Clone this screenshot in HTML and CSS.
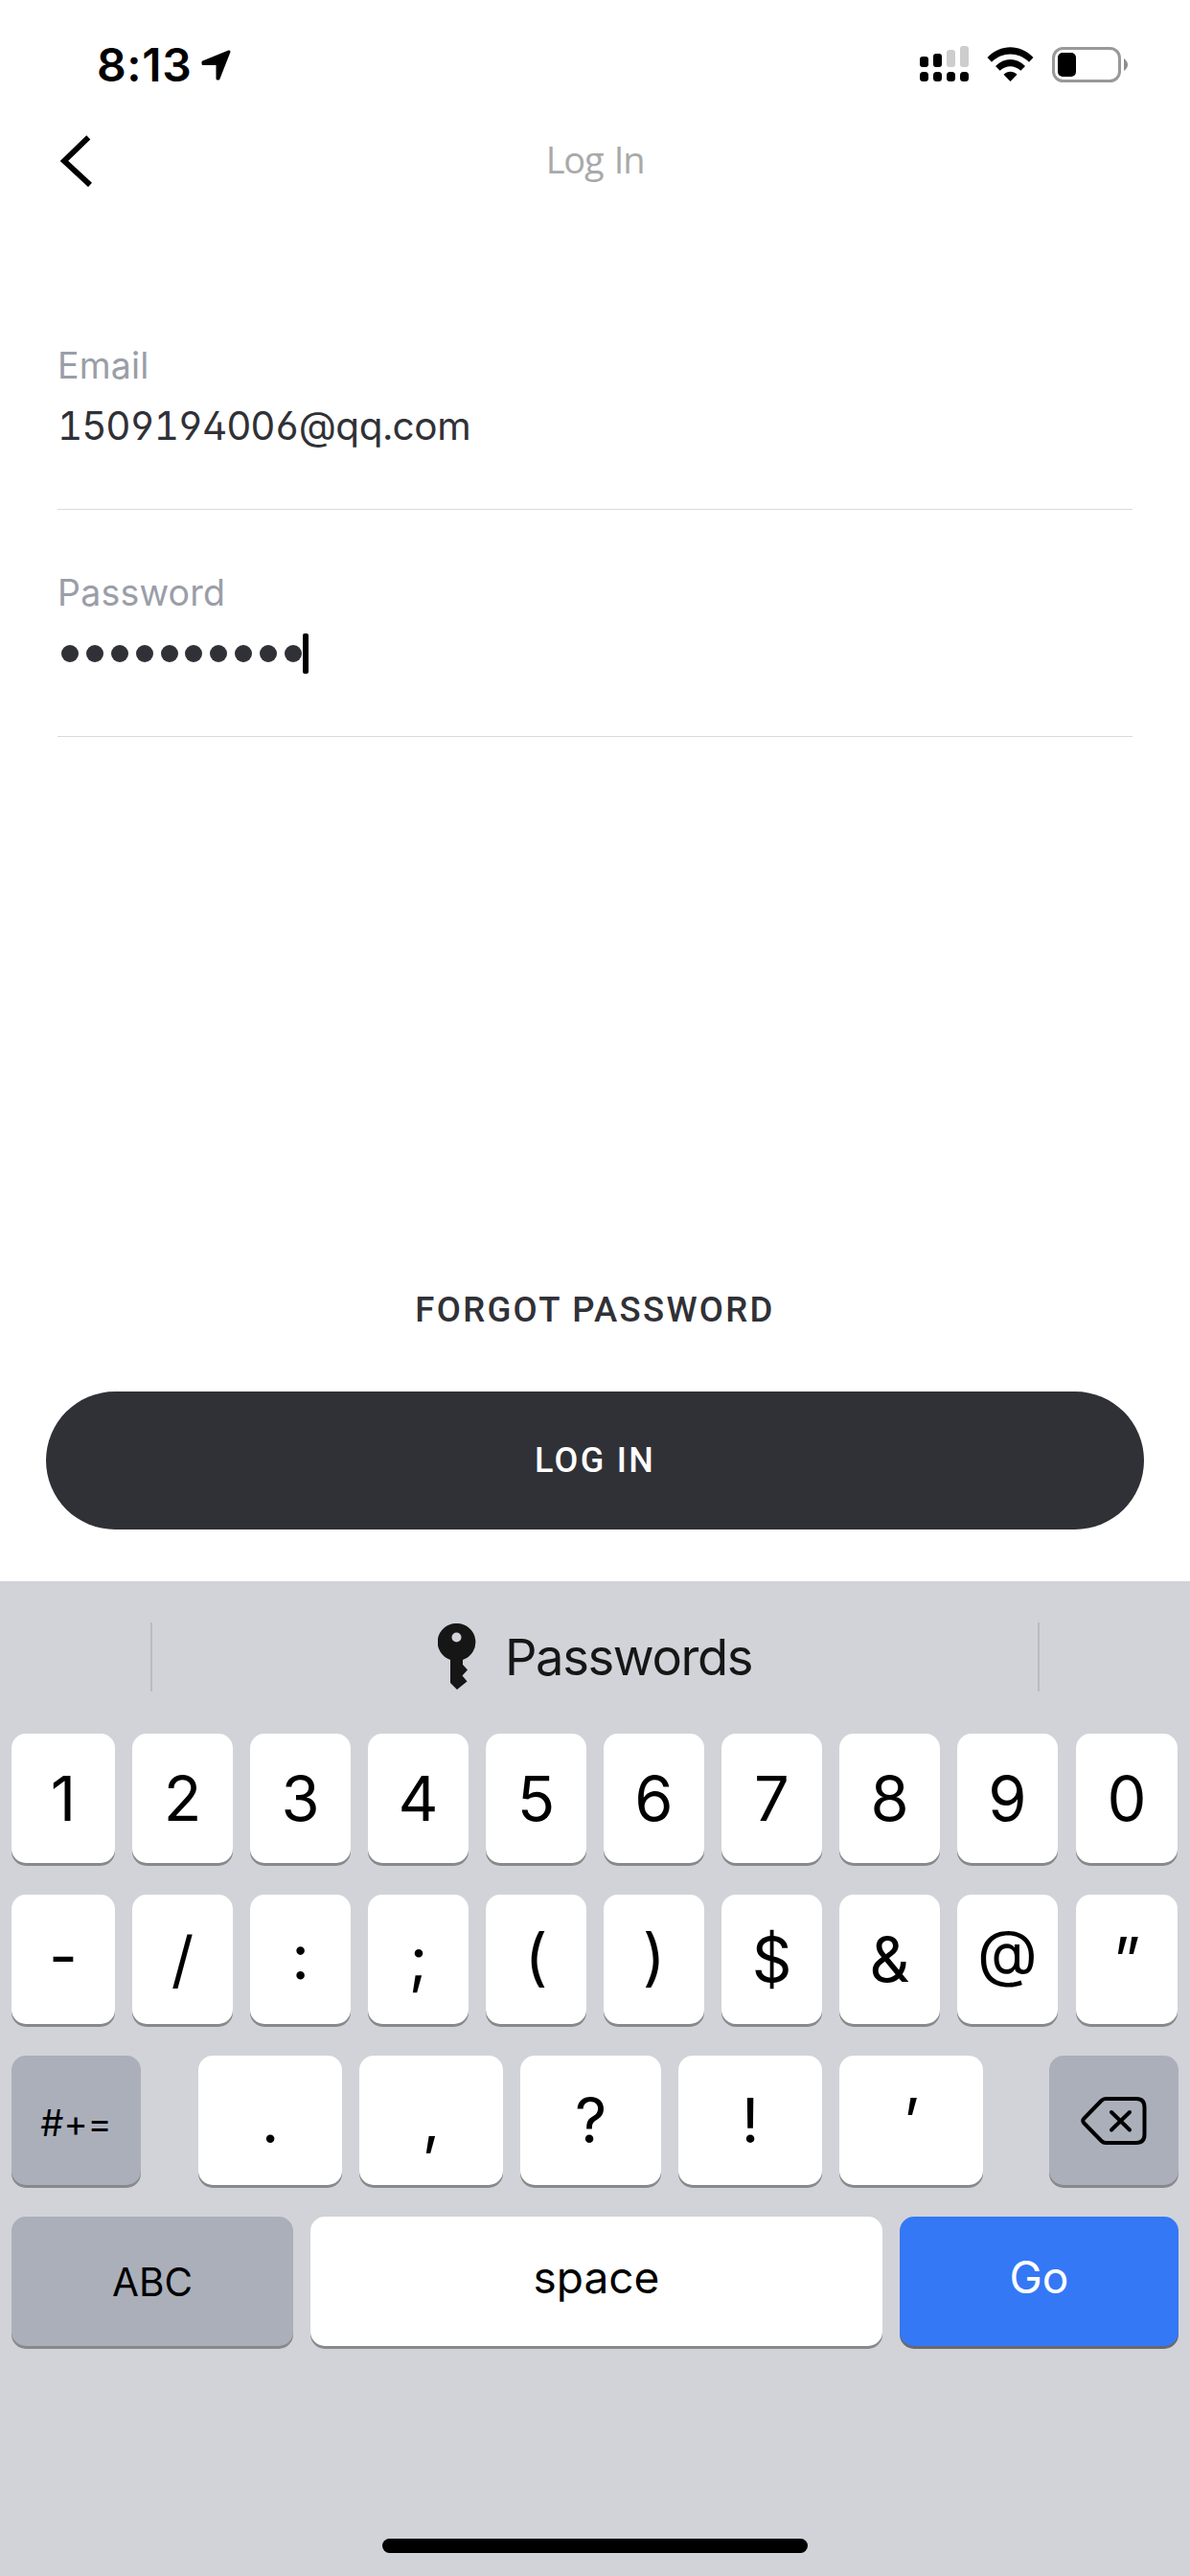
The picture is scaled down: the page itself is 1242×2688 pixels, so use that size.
FILE: index.html
```html
<!DOCTYPE html>
<html lang="en">

<head>

	<title>Log In</title>

	<meta charset="utf-8" />

	<link rel="stylesheet" href="styles.css">

</head>

<body>

	<div id="status">

		<span class="time">8:13</span>

		<svg class="location" width="32" height="32" viewBox="0 0 32 32">
			<path d="M2 13 L29 2 L18 30 L17 30 L17 14.5 L2 14.5 Z" stroke="#000" stroke-width="3" stroke-linejoin="round" />
		</svg>

		<svg class="signal" width="51" height="37" viewBox="0 0 51 37">
			<rect x="0" y="11" width="9" height="11" rx="3" />
			<rect x="14" y="8" width="9" height="14" rx="3" />
			<rect x="28" y="4" width="9" height="18" rx="3" fill="#cdcdcd" />
			<rect x="42" y="0" width="9" height="22" rx="3" fill="#cdcdcd" />
			<rect x="0" y="27" width="9" height="10" rx="3.5" />
			<rect x="14" y="27" width="9" height="10" rx="3.5" />
			<rect x="28" y="27" width="9" height="10" rx="3.5" />
			<rect x="42" y="27" width="9" height="10" rx="3.5" />
		</svg>

		<svg class="wifi" width="49" height="36" viewBox="0 0 49 36">
			<path d="M0.5 11 C14 -3.5 35 -3.5 48.5 11 L44 15.8 C33 4.8 16 4.8 5 15.8 Z" />
			<path d="M9 20 C18 10.7 31 10.7 40 20 L35.3 24.8 C29 18.8 20 18.8 13.7 24.8 Z" />
			<path d="M17.5 28.8 C21.5 24.8 27.5 24.8 31.5 28.8 L24.5 36 Z" />
		</svg>

		<svg class="battery" width="79" height="37" viewBox="0 0 79 37">
			<rect x="1.5" y="1.5" width="69" height="34" rx="10" fill="none" stroke="#999" stroke-width="3" />
			<rect x="6" y="6" width="19" height="25" rx="5" />
			<path d="M75 12 Q79 15 79 18.5 Q79 22 75 25 Z" fill="#8e8e8e" />
		</svg>

	</div>

	<div id="heading">

		<svg class="back" width="34" height="54" viewBox="0 0 34 54">
			<path d="M29.3 2.3 L4 27 L31 52" fill="none" stroke="#000" stroke-width="5.8" />
		</svg>

		<h1>Log In</h1>

	</div>

	<form id="loginForm" action="" onsubmit="return false">

		<div class="field">
			<div class="label">Email</div>
			<div class="value email"><span>1509194006</span>@qq.com</div>
		</div>

		<div class="field">
			<div class="label">Password</div>
			<div class="value secret">
				<i></i><i></i><i></i><i></i><i></i><i></i><i></i><i></i><i></i><i></i>
				<span class="caret"></span>
			</div>
		</div>

		<a class="forgot">FORGOT PASSWORD</a>

		<button class="submit" type="submit">LOG IN</button>

	</form>

	<div id="keyboard">

		<div class="suggest">
			<svg width="40" height="70" viewBox="0 0 40 70">
				<path fill-rule="evenodd" d="M19.5 0 A19.5 19.5 0 0 1 26 38 L26 43 L31 48.5 L25.5 54.5 L30.5 60.5 L20 69 L13 62 L13 38 A19.5 19.5 0 0 1 19.5 0 Z M19.5 9.5 A5 5 0 1 0 19.5 19.5 A5 5 0 1 0 19.5 9.5 Z" fill="#161616" />
			</svg>
			<span>Passwords</span>
		</div>

		<!-- numbers -->
		<div class="row ten">
			<b>1</b><b>2</b><b>3</b><b>4</b><b>5</b><b>6</b><b>7</b><b>8</b><b>9</b><b>0</b>
		</div>

		<!-- symbols -->
		<div class="row ten symbols">
			<b>-</b><b>/</b><b class="colon">:</b><b>;</b><b>(</b><b>)</b><b>$</b><b>&amp;</b><b>@</b><b class="quote">”</b>
		</div>

		<!-- punctuation -->
		<div class="row punct">
			<b class="dark more">#+=</b>
			<b>.</b><b>,</b><b>?</b><b>!</b><b>’</b>
			<b class="dark delete">
				<svg width="69" height="50" viewBox="0 0 69 50" fill="none" stroke="#000" stroke-width="4" stroke-linecap="round" stroke-linejoin="round">
					<path d="M26 2 L58 2 Q66.500 2 66.500 11 L66.500 39 Q66.500 48 58 48 L26 48 Q23.500 48 21.500 46 L3 27 Q1.500 25 3 23 L21.500 4 Q23.500 2 26 2 Z" />
					<path d="M32 16 L51 34.500 M51 16 L32 34.500" />
				</svg>
			</b>
		</div>

		<div class="row bottom">
			<b class="dark abc">ABC</b>
			<b class="space">space</b>
			<b class="go">Go</b>
		</div>

		<div class="home"></div>

	</div>

</body>
</html>
```

FILE: styles.css
```css
html,body {
	margin:0;
	padding:0
	}
body {
	width:1242px;
	height:2688px;
	overflow:hidden;
	display:flex;
	flex-direction:column;
	background-color:#fff;
	font-family:Inter,"Liberation Sans",sans-serif;
	color:#303136;
	}
svg {
	display:block;
	}

#status {
	height:132px;
	box-sizing:border-box;
	padding:48px 65px 0 101px;
	display:flex;
	align-items:flex-start;
	color:#000;
	}
.time {
	width:109px;
	line-height:40px;
	font-size:48px;
	font-weight:600;
	letter-spacing:0.6px;
	}
.location {
	margin-top:4px;
	}
.signal {
	margin-left:auto;
	}
.wifi {
	margin:1px 19px 0 19px;
	}
.battery {
	margin-top:1px;
	}

#heading {
	height:132px;
	padding:0 63px;
	display:grid;
	grid-template-columns:34px 1fr 34px;
	}
.back {
	margin-top:9px;
	}
h1 {
	margin:7px 0 0 0;
	font-family:"Open Sans",sans-serif;
	font-size:38px;
	line-height:54px;
	font-weight:400;
	letter-spacing:-1.3px;
	word-spacing:3px;
	text-align:center;
	color:#a9a9a9;
	}

#loginForm {
	height:1386px;
	padding:0 48px;
	display:flex;
	flex-direction:column;
	}
.field {
	height:237px;
	margin:0 12px;
	border-bottom:1px solid #dadada;
	box-sizing:border-box;
	}
.field:first-child {
	height:268px;
	padding-top:31px;
	}
.label {
	padding-top:64px;
	font-size:37.5px;
	line-height:46px;
	letter-spacing:0.2px;
	color:#9a9ea8;
	}
.value {
	height:60px;
	line-height:60px;
	}
.email {
	margin-top:10px;
	font-size:40.5px;
	letter-spacing:-0.4px;
	font-feature-settings:"tnum","cv02","cv03","cv04";
	}
.email span {
	letter-spacing:-1.1px;
	}
.secret {
	display:flex;
	align-items:center;
	gap:7.9px;
	padding-left:4px;
	margin-top:10px;
	}
.secret i {
	width:18px;
	height:18px;
	border-radius:9px;
	background-color:#303136;
	}
.caret {
	width:6px;
	height:42px;
	margin-left:-7px;
	border-radius:2px;
	background-color:#000;
	}

.forgot {
	margin-top:568px;
	font-family:Roboto,sans-serif;
	font-size:36.5px;
	font-weight:500;
	line-height:60px;
	letter-spacing:2.3px;
	text-align:center;
	}
.submit {
	height:144px;
	margin-top:55px;
	border:0;
	padding:0 0 1px 0;
	border-radius:72px;
	background-color:#303136;
	font-family:Roboto,sans-serif;
	font-size:36px;
	font-weight:500;
	letter-spacing:2.3px;
	color:#fff;
	}

#keyboard {
	height:1038px;
	box-sizing:border-box;
	padding:43px 12px 0 12px;
	background-color:#d2d3d8;
	color:#000;
	}
.suggest {
	height:72px;
	margin:0 145px 44px 145px;
	border-left:2px solid #bbbcc1;
	border-right:2px solid #bbbcc1;
	display:flex;
	align-items:center;
	justify-content:center;
	gap:30px;
	font-size:52.5px;
	color:#161616;
	}
.suggest span {
	letter-spacing:-1.4px;
	}

.row {
	height:135px;
	margin-bottom:33px;
	display:flex;
	gap:18px;
	}
.row b {
	display:flex;
	align-items:center;
	justify-content:center;
	box-sizing:border-box;
	border-radius:15px;
	background-color:#fff;
	box-shadow:0 3px 0 #88898d;
	font-size:65px;
	font-weight:400;
	}
.ten b {
	width:105px;
	}
.ten b:first-child {
	width:108px;
	}
.ten b:last-child {
	width:106px;
	margin-left:1px;
	}
.symbols {
	font-feature-settings:"case";
	}
.symbols .colon {
	padding-top:8px;
	}
.punct b {
	width:150px;
	}
.punct b:nth-child(4) {
	width:147px;
	}
.row .dark {
	width:135px;
	background-color:#abafba;
	}
.row .more {
	margin-right:42px;
	padding-top:5px;
	font-size:38px;
	}
.row .delete {
	margin-left:51px;
	}
.row .abc {
	width:294px;
	padding-top:2px;
	font-size:40.5px;
	}
.row .space {
	width:597px;
	padding-bottom:9px;
	font-size:46px;
	}
.row .go {
	width:291px;
	padding-bottom:9px;
	background-color:#3478f6;
	box-shadow:0 3px 0 #686a6f;
	font-size:46px;
	color:#fff;
	}

.home {
	width:444px;
	height:15px;
	margin:201px auto 0 auto;
	border-radius:7.5px;
	background-color:#000;
	}
```
